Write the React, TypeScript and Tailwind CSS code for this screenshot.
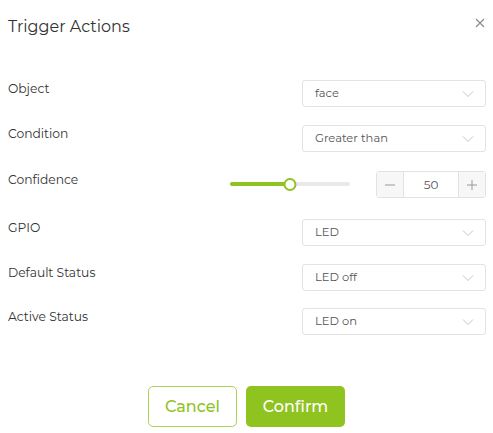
import React, { useState } from 'react';

const font = { fontFamily: 'Montserrat, "Open Sans", "Noto Sans", sans-serif' };

function Chevron() {
    return (
        <svg width="12" height="8" viewBox="0 0 12 8" className="text-[#c4c4c4]">
            <path d="M1 1.5 L6 6.5 L11 1.5" fill="none" stroke="currentColor" strokeWidth="1" />
        </svg>
    );
}

function Select({ value }: { value: string }) {
    return (
        <div className="flex h-[27px] w-[184px] items-center justify-between rounded-[3px] border border-[#e3e3e3] bg-white pl-[12px] pr-[11px]">
            <span className="text-[11.5px] text-[#555]">{value}</span>
            <Chevron />
        </div>
    );
}

function Row({ label, children, className }: { label: string; children: React.ReactNode; className?: string }) {
    return (
        <div className={`flex items-start justify-between ${className ?? ''}`}>
            <span className="text-[12.3px] leading-[18px] text-[#333]">{label}</span>
            {children}
        </div>
    );
}

export default function App() {
    const [confidence, setConfidence] = useState(50);

    return (
        <div className="h-[433px] w-[493px] bg-white pl-[8px] pr-[7px]" style={font}>
            <div className="flex items-center justify-between pt-[16px]">
                <h2 className="text-[16px] leading-[22px] text-[#333]">Trigger Actions</h2>
                <button className="mr-[1px] mt-[-8px] text-[#888]">
                    <svg width="10" height="10" viewBox="0 0 10 10">
                        <path d="M1 1 L9 9 M9 1 L1 9" stroke="currentColor" strokeWidth="1.1" />
                    </svg>
                </button>
            </div>

            <div className="mt-[42px] flex flex-col">
                <Row label="Object">
                    <Select value="face" />
                </Row>
                <Row label="Condition" className="mt-[18px]">
                    <Select value="Greater than" />
                </Row>
                <Row label="Confidence" className="mt-[19px]">
                    <div className="flex items-center">
                        <div className="relative h-[27px] w-[120px]">
                            <div className="absolute left-0 right-0 top-[11px] h-[4px] rounded-full bg-[#e9e9e9]" />
                            <div
                                className="absolute left-0 top-[11px] h-[4px] rounded-full bg-[#8fc31f]"
                                style={{ width: `${confidence}%` }}
                            />
                            <div
                                className="absolute top-[6.5px] h-[13px] w-[13px] -translate-x-1/2 rounded-full border-2 border-[#8fc31f] bg-white"
                                style={{ left: `${confidence}%` }}
                            />
                        </div>
                        <div className="ml-[26px] flex h-[27px] w-[110px] rounded-[3px] border border-[#e3e3e3]">
                            <button
                                onClick={() => setConfidence(Math.max(0, confidence - 1))}
                                className="flex w-[27px] items-center justify-center border-r border-[#e3e3e3] bg-[#f7f7f7] text-[#999]"
                            >
                                <svg width="10" height="10" viewBox="0 0 10 10">
                                    <path d="M0 5 H10" stroke="currentColor" strokeWidth="1" />
                                </svg>
                            </button>
                            <div className="flex flex-1 items-center justify-center text-[12px] text-[#555]">{confidence}</div>
                            <button
                                onClick={() => setConfidence(Math.min(100, confidence + 1))}
                                className="flex w-[27px] items-center justify-center border-l border-[#e3e3e3] bg-[#f7f7f7] text-[#999]"
                            >
                                <svg width="10" height="10" viewBox="0 0 10 10">
                                    <path d="M0 5 H10 M5 0 V10" stroke="currentColor" strokeWidth="1" />
                                </svg>
                            </button>
                        </div>
                    </div>
                </Row>
                <Row label="GPIO" className="mt-[21px]">
                    <Select value="LED" />
                </Row>
                <Row label="Default Status" className="mt-[18px]">
                    <Select value="LED off" />
                </Row>
                <Row label="Active Status" className="mt-[17px]">
                    <Select value="LED on" />
                </Row>
            </div>

            <div className="mt-[51px] flex justify-center gap-[9px] pr-[1px]">
                <button className="h-[41px] w-[89px] rounded-[5px] border border-[#a9d356] bg-white text-[16px] font-medium text-[#8fc31f]">
                    Cancel
                </button>
                <button className="h-[41px] w-[99px] rounded-[5px] bg-[#8fc31f] text-[16px] font-medium text-white">
                    Confirm
                </button>
            </div>
        </div>
    );
}
